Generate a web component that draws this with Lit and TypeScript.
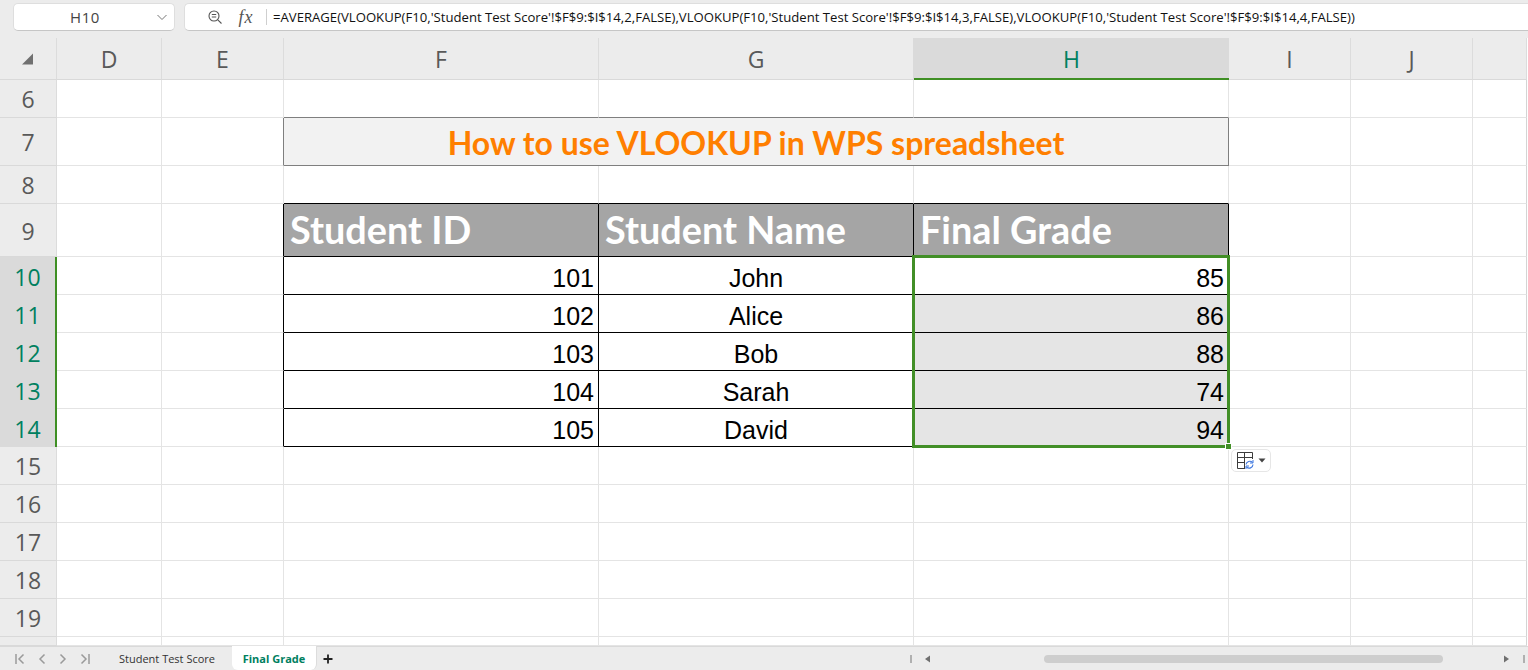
import { LitElement, html, css } from "lit";
import { customElement } from "lit/decorators.js";

const COLS = ["D", "E", "F", "G", "H", "I", "J", ""];
const ROWS = [6, 7, 8, 9, 10, 11, 12, 13, 14, 15, 16, 17, 18, 19, 20];
const SEL_ROWS = [10, 11, 12, 13, 14];
const DATA: Record<number, [string, string, string]> = {
  9: ["Student ID", "Student Name", "Final Grade"],
  10: ["101", "John", "85"],
  11: ["102", "Alice", "86"],
  12: ["103", "Bob", "88"],
  13: ["104", "Sarah", "74"],
  14: ["105", "David", "94"],
};
const FORMULA =
  "=AVERAGE(VLOOKUP(F10,'Student Test Score'!$F$9:$I$14,2,FALSE),VLOOKUP(F10,'Student Test Score'!$F$9:$I$14,3,FALSE),VLOOKUP(F10,'Student Test Score'!$F$9:$I$14,4,FALSE))";

@customElement("app-root")
export class AppRoot extends LitElement {
  static styles = css`
    :host {
      display: flex;
      flex-direction: column;
      width: 100%;
      height: 670px;
      overflow: hidden;
      background: #fff;
      font-family: "Open Sans", "Noto Sans", sans-serif;
    }
    .toolbar {
      flex: none;
      height: 38px;
      box-sizing: border-box;
      background: #ececec;
      padding: 3px 0 0 13px;
      display: flex;
      gap: 9px;
      align-items: flex-start;
    }
    .box {
      height: 28px;
      box-sizing: border-box;
      background: #fff;
      border: 1px solid #dedede;
      border-bottom-color: #c6c6c6;
      display: flex;
      align-items: center;
    }
    .namebox {
      width: 162px;
      border-radius: 5px;
      padding: 0 5px 0 0;
      color: #444;
      font-size: 15px;
    }
    .namebox span {
      flex: 1;
      text-align: center;
      padding-left: 1px;
      letter-spacing: 0.6px;
    }
    .formulabox {
      flex: 1;
      border-radius: 5px 0 0 5px;
      border-right: 0;
      padding-left: 22px;
    }
    .fx {
      font-family: "Liberation Serif", serif;
      font-style: italic;
      font-size: 18px;
      letter-spacing: 1px;
      color: #555;
      width: 20px;
      margin-left: 13px;
      text-align: center;
    }
    .sep {
      width: 1px;
      height: 16px;
      background: #cfcfcf;
      margin: 0 6px 0 10px;
    }
    .formula {
      font-family: "Open Sans", sans-serif;
      font-size: 13.13px;
      color: #111;
      white-space: nowrap;
    }
    .sheet {
      flex: 1;
      min-height: 0;
      position: relative;
      overflow: hidden;
      display: grid;
      grid-template-columns: 57px 105px 122px 315px 315px 315px 122px 122px 54px;
      grid-template-rows: 42px 38px 48px 38px 53px repeat(10, 38px) 9px;
    }
    .cell {
      box-sizing: border-box;
      border-right: 1px solid #e4e4e4;
      border-bottom: 1px solid #e4e4e4;
      min-width: 0;
      overflow: hidden;
      display: flex;
      align-items: center;
    }
    .head {
      background: #ececec;
      border-right-color: #dcdcdc;
      border-bottom-color: #d9d9d9;
      justify-content: center;
      color: #595959;
      font-size: 23px;
      padding-top: 1px;
    }
    .head.sel {
      background: #dadada;
      color: #00805f;
    }
    .head.pre {
      border-right-color: #dadada;
    }
    .head.col.sel {
      border-bottom: 2px solid #3f8f24;
      border-right: 0;
    }
    .head.row.sel {
      border-bottom: 0;
      border-right: 2px solid #3f8f24;
    }
    .last {
      border-right-color: #d4d4d4;
    }
    .b-r {
      border-right-color: #000;
    }
    .b-b {
      border-bottom-color: #000;
    }
    .g-r {
      border-right-color: #7f7f7f;
    }
    .g-b {
      border-bottom-color: #7f7f7f;
    }
    .title {
      grid-column: span 3;
      background: #f2f2f2;
      justify-content: center;
      color: #ff7f00;
      font-family: Lato, sans-serif;
      font-weight: 700;
      font-size: 32px;
      padding-top: 2px;
    }
    .th {
      background: #a5a5a5;
      color: #fff;
      font-family: Lato, sans-serif;
      font-weight: 700;
      font-size: 37.8px;
      padding: 0 0 1px 6px;
      white-space: nowrap;
    }
    .td {
      color: #000;
      font-family: "Liberation Sans", Arial, sans-serif;
      font-size: 25px;
      padding: 6px 4px 0;
    }
    .right {
      justify-content: flex-end;
    }
    .center {
      justify-content: center;
    }
    .shade {
      background: #e5e5e5;
    }
    .selection {
      position: absolute;
      left: 912px;
      top: 217px;
      width: 318px;
      height: 193px;
      box-sizing: border-box;
      border: 3px solid #428f27;
      pointer-events: none;
    }
    .fill {
      position: absolute;
      left: 1225px;
      top: 405px;
      width: 7px;
      height: 7px;
      box-sizing: border-box;
      background: #428f27;
      border: 1px solid #fff;
    }
    .paste {
      position: absolute;
      left: 1231px;
      top: 411px;
      width: 40px;
      height: 23px;
      box-sizing: border-box;
      background: #fff;
      border: 1px solid #e6e6e6;
      border-radius: 5px;
      display: flex;
      align-items: center;
      padding-left: 5px;
      gap: 4px;
    }
    .statusbar {
      flex: none;
      height: 24px;
      box-sizing: border-box;
      background: #ececec;
      border-top: 1px solid #d9d9d9;
      display: flex;
      align-items: stretch;
      font-size: 11px;
    }
    .nav {
      width: 119px;
      flex: none;
      display: flex;
      align-items: center;
      padding-left: 14px;
      box-sizing: border-box;
      gap: 11px;
    }
    .tab {
      display: flex;
      align-items: center;
      color: #333;
    }
    .tab.inactive {
      width: 113px;
    }
    .tab.active {
      width: 85px;
      justify-content: center;
      background: #fff;
      color: #00805f;
      font-weight: 700;
      border-radius: 0 0 6px 6px;
      margin-top: -1px;
      border-right: 1px solid #dcdcdc;
      box-sizing: border-box;
    }
    .plus {
      margin-left: 6px;
      display: flex;
      align-items: center;
    }
    .track {
      flex: 1;
      display: flex;
      align-items: center;
      margin-left: 577px;
    }
    .tick {
      width: 2px;
      height: 8px;
      background: #b0b0b0;
      flex: none;
    }
    .tick-end {
      margin-left: 13px;
    }
    .arrow {
      flex: none;
      display: block;
    }
    .arrow-left {
      margin-left: 12px;
    }
    .thumb {
      flex: none;
      width: 399px;
      height: 8px;
      border-radius: 4px;
      background: #cecece;
      margin: 0 60px 0 113px;
    }
  `;

  private dataCell(r: number, i: number) {
    const row = DATA[r];
    if (r === 9) {
      return html`<div class="cell th b-r b-b">${row[i]}</div>`;
    }
    const align = i === 1 ? "center" : "right";
    const shade = i === 2 && r > 10 ? "shade" : "";
    return html`<div class="cell td b-r b-b ${align} ${shade}">${row[i]}</div>`;
  }

  private bodyRow(r: number) {
    const selRow = SEL_ROWS.includes(r);
    const header = html`<div class="cell head row ${selRow ? "sel" : ""}">${r === 20 ? "" : r}</div>`;
    const inTable = r === 9 || selRow;
    const blank = (c: string, extra = "") =>
      html`<div class="cell ${c === "" ? "last" : ""} ${extra}"></div>`;

    if (r === 7) {
      return html`${header}${blank("D")}${blank("E", "g-r")}
        <div class="cell title g-r g-b">How to use VLOOKUP in WPS spreadsheet</div>
        ${blank("I")}${blank("J")}${blank("")}`;
    }
    return html`${header}
    ${COLS.map((c) => {
      const idx = ["F", "G", "H"].indexOf(c);
      if (idx >= 0 && inTable) return this.dataCell(r, idx);
      if (c === "E" && inTable) return blank(c, "b-r");
      if (idx >= 0 && r === 6) return blank(c, "g-b");
      if (idx >= 0 && r === 8) return blank(c, "b-b");
      return blank(c);
    })}`;
  }

  render() {
    return html`
      <div class="toolbar">
        <div class="box namebox">
          <span>H10</span>
          <svg width="14" height="14" viewBox="0 0 14 14" fill="none" stroke="#777" stroke-width="1">
            <path d="M2.500 5l4.500 4.500L11.500 5" />
          </svg>
        </div>
        <div class="box formulabox">
          <svg width="16" height="16" viewBox="0 0 16 16" fill="none" stroke="#555" stroke-width="1.100">
            <circle cx="7" cy="7" r="5" />
            <path d="M4.800 5.500h4.400M4.800 8h4.400M10.800 10.800l3.700 3.700" />
          </svg>
          <span class="fx">fx</span>
          <span class="sep"></span>
          <span class="formula">${FORMULA}</span>
        </div>
      </div>

      <div class="sheet">
        <div class="cell head">
          <svg width="14" height="14" viewBox="0 0 14 14">
            <path d="M12 1.500v10.500a0.500 0.500 0 0 1-0.500 0.500H1z" fill="#707070" />
          </svg>
        </div>
        ${COLS.map(
          (c) =>
            html`<div class="cell head col ${c === "H" ? "sel" : c === "G" ? "pre" : ""}">${c}</div>`
        )}
        ${ROWS.map((r) => this.bodyRow(r))}

        <div class="selection"></div>
        <div class="fill"></div>
        <div class="paste">
          <svg width="17" height="17" viewBox="0 0 17 17" fill="none">
            <path d="M.5 .5H15.500V7M.5 .5V16.500H8M.5 5.500H15.500M.5 10.500H7.500M7.500 .5V16.500" stroke="#3c3c3c" stroke-width="1" />
            <path d="M9 12.500a3.800 3.800 0 0 1 6.500-2M16 12.500a3.800 3.800 0 0 1-6.500 2.500" stroke="#3f78e0" stroke-width="1.100" />
            <path d="M16 8v3h-3M9 17v-3h3" stroke="#3f78e0" stroke-width="1" />
          </svg>
          <svg width="8" height="5" viewBox="0 0 8 5"><path d="M0.500 0.500h7L4 4.500z" fill="#444" /></svg>
        </div>
      </div>

      <div class="statusbar">
        <div class="nav">
          <svg width="12" height="12" viewBox="0 0 12 12" fill="none" stroke="#9a9a9a" stroke-width="1.500">
            <path d="M2 1v10M9.500 1.500L5 6l4.500 4.500" />
          </svg>
          <svg width="10" height="12" viewBox="0 0 10 12" fill="none" stroke="#9a9a9a" stroke-width="1.500">
            <path d="M7.500 1.500L3 6l4.500 4.500" />
          </svg>
          <svg width="10" height="12" viewBox="0 0 10 12" fill="none" stroke="#9a9a9a" stroke-width="1.500">
            <path d="M2.500 1.500L7 6l-4.500 4.500" />
          </svg>
          <svg width="12" height="12" viewBox="0 0 12 12" fill="none" stroke="#9a9a9a" stroke-width="1.500">
            <path d="M10 1v10M2.500 1.500L7 6l-4.500 4.500" />
          </svg>
        </div>
        <div class="tab inactive">Student Test Score</div>
        <div class="tab active">Final Grade</div>
        <div class="plus">
          <svg width="10" height="10" viewBox="0 0 10 10" stroke="#222" stroke-width="1.800">
            <path d="M5 0.500v9M0.500 5h9" />
          </svg>
        </div>
        <div class="track">
          <span class="tick"></span>
          <svg class="arrow arrow-left" width="7" height="8" viewBox="0 0 7 8"><path d="M1 4l5-3.500v7z" fill="#6f6f6f" /></svg>
          <span class="thumb"></span>
          <svg class="arrow" width="7" height="8" viewBox="0 0 7 8"><path d="M6 4L1 0.500v7z" fill="#6f6f6f" /></svg>
          <span class="tick tick-end"></span>
        </div>
      </div>
    `;
  }
}
